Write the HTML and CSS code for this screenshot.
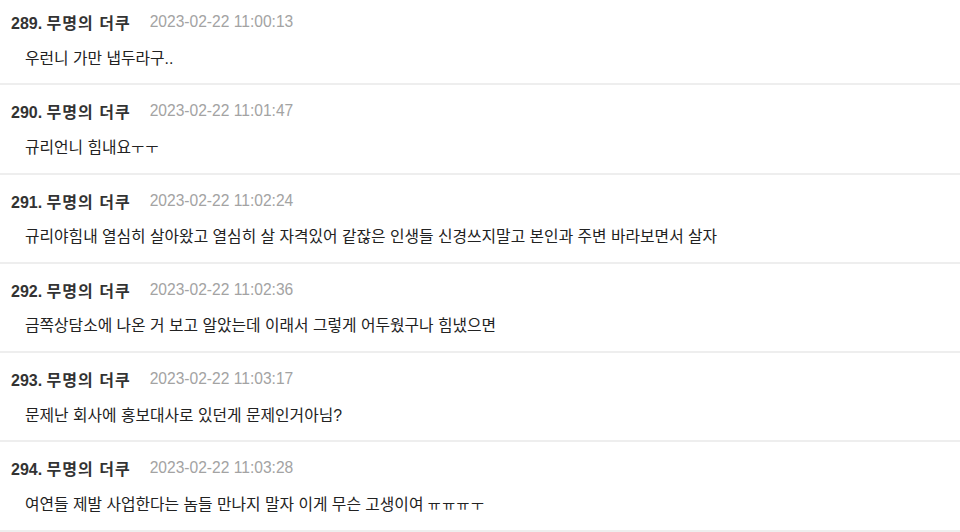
FILE: index.html
```html
<!DOCTYPE html>
<html lang="ko">
<head>
<meta charset="utf-8">
<link rel="stylesheet" href="styles.css">
</head>
<body>
<div class="thread">
  <div class="comment">
    <div class="head"><span class="name">289. <span class="nick">무명의 더쿠</span></span><span class="date">2023-02-22 11:00:13</span></div>
    <div class="text">우런니 가만 냅두라구..</div>
  </div>
  <div class="comment">
    <div class="head"><span class="name">290. <span class="nick">무명의 더쿠</span></span><span class="date">2023-02-22 11:01:47</span></div>
    <div class="text">규리언니 힘내요<span class="jamo">ㅜㅜ</span></div>
  </div>
  <div class="comment">
    <div class="head"><span class="name">291. <span class="nick">무명의 더쿠</span></span><span class="date">2023-02-22 11:02:24</span></div>
    <div class="text">규리야힘내 열심히 살아왔고 열심히 살 자격있어 같잖은 인생들 신경쓰지말고 본인과 주변 바라보면서 살자</div>
  </div>
  <div class="comment">
    <div class="head"><span class="name">292. <span class="nick">무명의 더쿠</span></span><span class="date">2023-02-22 11:02:36</span></div>
    <div class="text">금쪽상담소에 나온 거 보고 알았는데 이래서 그렇게 어두웠구나 힘냈으면</div>
  </div>
  <div class="comment">
    <div class="head"><span class="name">293. <span class="nick">무명의 더쿠</span></span><span class="date">2023-02-22 11:03:17</span></div>
    <div class="text">문제난 회사에 홍보대사로 있던게 문제인거아님?</div>
  </div>
  <div class="comment">
    <div class="head"><span class="name">294. <span class="nick">무명의 더쿠</span></span><span class="date">2023-02-22 11:03:28</span></div>
    <div class="text">여연들 제발 사업한다는 놈들 만나지 말자 이게 무슨 고생이여 <span class="jamo">ㅠㅠㅠㅜ</span></div>
  </div>
</div>
</body>
</html>
```
FILE: styles.css
```css
html, body {
  margin: 0;
  padding: 0;
  background: #ffffff;
}
body {
  font-family: "Liberation Sans", "Noto Sans CJK KR", sans-serif;
  overflow: hidden;
}
.thread {
  margin-top: -4px;
}
.comment {
  padding: 16px 0 13.8px;
  border-bottom: 2px solid #eeeeee;
}
.head {
  display: flex;
  align-items: center;
  height: 20px;
  padding-left: 11px;
  gap: 20px;
  white-space: nowrap;
}
.name {
  font-size: 16px;
  font-weight: bold;
  color: #333333;
}
.nick {
  letter-spacing: 1px;
  margin-right: -1px;
}
.date {
  font-size: 15.6px;
  color: #a3a3a3;
}
.text {
  margin-top: 15.5px;
  padding-left: 25px;
  font-size: 15.8px;
  line-height: 22px;
  color: #222222;
  white-space: nowrap;
}
.jamo {
  font-size: 14px;
  letter-spacing: 1.5px;
}
```
